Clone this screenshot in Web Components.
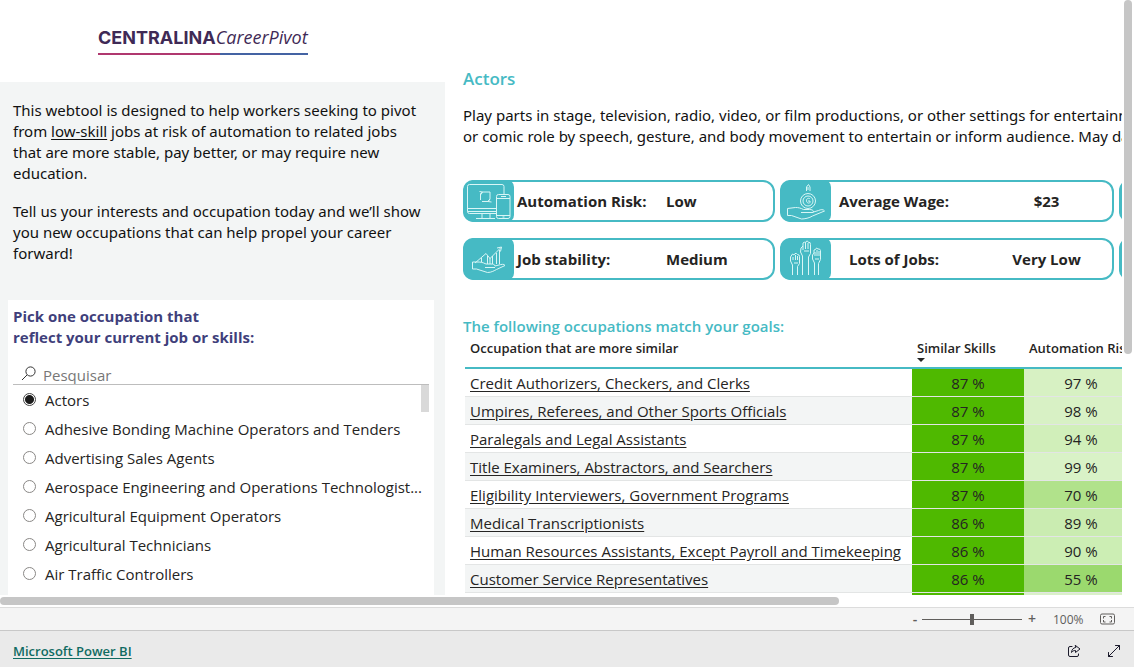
<!DOCTYPE html>
<html lang="en">
<head>
<meta charset="utf-8">
<title>Centralina Career Pivot</title>
<style>
html, body { height: 100%; margin: 0; }
body { font-family: "Open Sans", "Noto Sans", sans-serif; font-size: 15px; line-height: 21px; color: #252423; background: #fff; }
</style>
</head>
<body>
<report-app></report-app>
<script>
const define = (name, html, setup) => {
  const template = document.createElement('template');
  template.innerHTML = html;
  customElements.define(name, class extends HTMLElement {
    connectedCallback() {
      if (this.shadowRoot) return;
      this.attachShadow({ mode: 'open' }).append(template.content.cloneNode(true));
      if (setup) setup(this, this.shadowRoot);
    }
  });
};

define('brand-logo', `
<style>
:host { display: flex; justify-content: flex-start; box-sizing: border-box; height: 82px; padding: 25px 0 0 98px; color: #3f2a56; }
.mark { height: 30px; box-sizing: border-box; display: flex; align-items: baseline; line-height: 25px; white-space: nowrap; padding-bottom: 2px;
  border-bottom: 2px solid; border-image: linear-gradient(90deg, #b0386f 58%, #4463a3 58%) 1; }
b { font: 700 18px/25px Inter, sans-serif; }
i { font: italic 500 18px/25px "Open Sans", sans-serif; }
</style>
<div class="mark"><b>CENTRALINA</b><i>CareerPivot</i></div>`);

define('intro-text', `
<style>
:host { display: block; padding: 18px 13px 36px; color: #111; font-family: "Noto Sans", sans-serif; }
p { margin: 0 0 17px; white-space: nowrap; }
p:last-child { margin: 0; }
a { color: inherit; text-underline-offset: 2px; }
</style>
<p>This webtool is designed to help workers seeking to pivot<br>from <a href="#low-skill">low-skill</a> jobs at risk of automation to related jobs<br>that are more stable, pay better, or may require new<br>education.</p>
<p>Tell us your interests and occupation today and we’ll show<br>you new occupations that can help propel your career<br>forward!</p>`);

define('occupation-option', `
<style>
:host { display: block; height: 29px; }
label { display: flex; align-items: center; height: 29px; padding-left: 10px; gap: 9px; }
input { appearance: none; flex: none; width: 13px; height: 13px; margin: 0 0 2px; border: 1px solid #8a8886; border-radius: 50%; background: #fff; }
input:checked { border-color: #444; background: radial-gradient(circle, #1b1b1b 4px, #fff 5px); }
span { white-space: nowrap; }
</style>
<label><input type="radio" name="occupation"><span><slot></slot></span></label>`,
(host, root) => {
  const input = root.querySelector('input');
  input.checked = host.hasAttribute('checked');
  input.addEventListener('change', () => {
    for (const other of host.parentNode.querySelectorAll('occupation-option'))
      if (other !== host) other.shadowRoot.querySelector('input').checked = false;
  });
});

define('occupation-picker', `
<style>
:host { display: block; flex: 1; margin: 0 11px 0 8px; padding: 6px 5px 0; background: #fff; }
h2 { margin: 0 0 16px; font-size: 15px; line-height: 21px; font-weight: 700; color: #3f3f7b; }
.search { display: flex; align-items: center; height: 20px; gap: 7px; padding-left: 8px; border-bottom: 1px solid #bdbdbd; }
.search svg { flex: none; width: 15px; height: 15px; margin-bottom: 2px; }
input { flex: 1; min-width: 0; box-sizing: border-box; border: 0; padding: 2px 0 0; outline: 0; background: none; font: inherit; height: 20px; color: #252423; }
input::placeholder { color: #777; opacity: 1; }
.list { display: flex; }
.options { flex: 1; min-width: 0; margin-right: -8px; padding-top: 1px; }
.thumb { flex: none; width: 8px; height: 27px; background: #d9d9d9; }
</style>
<h2>Pick one occupation that<br>reflect your current job or skills:</h2>
<label class="search">
<svg viewBox="0 0 15 15" fill="none" stroke="#333" stroke-width="1"><circle cx="9.5" cy="5.5" r="4.6"/><path d="M6 9 1 14"/></svg>
<input type="search" placeholder="Pesquisar" aria-label="Pesquisar">
</label>
<div class="list">
<div class="options">
<occupation-option checked>Actors</occupation-option>
<occupation-option>Adhesive Bonding Machine Operators and Tenders</occupation-option>
<occupation-option>Advertising Sales Agents</occupation-option>
<occupation-option>Aerospace Engineering and Operations Technologist...</occupation-option>
<occupation-option>Agricultural Equipment Operators</occupation-option>
<occupation-option>Agricultural Technicians</occupation-option>
<occupation-option>Air Traffic Controllers</occupation-option>
</div>
<div class="thumb"></div>
</div>`);

define('stat-card', `
<style>
:host { display: flex; box-sizing: border-box; height: 42px; border: 2px solid #46bac4; border-radius: 12px; font-weight: 700; line-height: 21px; align-items: center; white-space: nowrap; }
.tile { flex: none; width: 51px; height: 42px; margin-left: -2px; border-radius: 10px 7px 7px 10px; background: #46bac4; }
::slotted(svg) { display: block; width: 51px; height: 42px; fill: none; stroke: #d9f6f6; stroke-width: 1; stroke-linejoin: round; }
.label { flex: none; width: 148px; padding-left: 3px; }
.value { flex: 1; padding-left: 1px; }
:host([centered]) .label { width: 126px; padding: 0; text-align: center; }
:host([centered]) .value { text-align: center; padding: 0 0 0 24px; }
</style>
<div class="tile"><slot name="icon"></slot></div>
<div class="label"><slot name="label"></slot></div>
<div class="value"><slot></slot></div>`);

define('stat-grid', `
<style>
:host { display: grid; grid-template-columns: 312px 334px 312px; gap: 16px 5px; }
</style>
<stat-card>
<svg slot="icon" viewBox="0 0 51 42"><path d="M33 33.500H6.500a2 2 0 0 1-2-2V6.500a2 2 0 0 1 2-2H39a2 2 0 0 1 2 2V14M4.500 28.500H33M4.500 31.500H33M19 34v4M27 34v4M13 38.500H32M17.500 20V13.500L19.500 12H27V19L25 21.500H19M16.500 11.500l3 .5-1.500 2.500M28.500 22l-3.500-.5 2-2.500"/><rect x="33.500" y="14.500" width="13.500" height="24" rx="2"/><path d="M33.500 18.500h13.500M33.500 35.500h13.500M38 16.500h5M39.500 37h2"/></svg>
<span slot="label">Automation Risk:</span>Low</stat-card>
<stat-card centered>
<svg slot="icon" viewBox="0 0 51 42"><path d="M26.500 11V7l2-2.500 1.500 2.500v4M28 10V7"/><circle cx="28" cy="21" r="7.500"/><circle cx="28" cy="21" r="5"/><path d="M30 19c-1-1.500-4-.5-3.500 2s3 2.500 3.500 1.500v-1.500h-2"/><path d="M7.500 28.500v7h4l10 3.500c3 0 8-1 11-3l12-5c-1-2-4-1.500-6-.5l-5 1.500c0-2-2-2.500-4-2.500h-6c-3-1.500-5-2-8-2zM21 32.500h12.500"/></svg>
<span slot="label">Average Wage:</span>$23</stat-card>
<stat-card></stat-card>
<stat-card>
<svg slot="icon" viewBox="0 0 51 42"><path d="M9.500 24v7h4l11 3.500c4 0 7-2 9-3l8.500-4c-1-2-4-1-6-.5l-4 1c0-1.500-2-2-4-2h-5c-4-2-6-2-9-2zM22 29.500h10"/><path d="M12 25l11-9.500 4 5 11-11M34 10l4.500-1-1 4.500M18.500 20v4M24.500 18v8M29.500 18v8M33.500 15v11M36.500 12v14M27 20v6"/></svg>
<span slot="label">Job stability:</span>Medium</stat-card>
<stat-card centered>
<svg slot="icon" viewBox="0 0 51 42"><path d="M22.500 37V18l-2-4 .5-4 2-2V5l1.500-1 1 1 .5-1.500 1.500-.5 1 1.500 1.500 0 .5 2v9l-2 3.500v18M23 8v4M25.500 5v6M28 5v6M24 13h5"/><path d="M12.500 37V27l-2-4v-4l2-3 1.500 1 1-1.500 1.500 0 1 1 1.500.5.500 1.500v7l-2 3v8.500M13 19v3M15.500 17v5M17.500 18v4M14 25h4"/><path d="M34.500 37V25l-2-4v-4l1.500-2v-3l1.500-.5 1-1.500 1.500 1 1.500 0 1 1.500v9l-2 4v11.500M35 14v4M37 12v6M39 13v5M35 21h4"/></svg>
<span slot="label">Lots of Jobs:</span>Very Low</stat-card>
<stat-card></stat-card>`);

const matches = [
  ['Credit Authorizers, Checkers, and Clerks', '87 %', '97 %', '#d7f1c3'],
  ['Umpires, Referees, and Other Sports Officials', '87 %', '98 %', '#d8f1c5'],
  ['Paralegals and Legal Assistants', '87 %', '94 %', '#d1efba'],
  ['Title Examiners, Abstractors, and Searchers', '87 %', '99 %', '#d9f2c7'],
  ['Eligibility Interviewers, Government Programs', '87 %', '70 %', '#b1e28b'],
  ['Medical Transcriptionists', '86 %', '89 %', '#caecb1'],
  ['Human Resources Assistants, Except Payroll and Timekeeping', '86 %', '90 %', '#cceeb4'],
  ['Customer Service Representatives', '86 %', '55 %', '#9bd96e'],
  ['', '', '', '#daf0c9']
];

define('match-table', `
<style>
:host { display: block; padding-left: 2px; }
table { border-collapse: separate; border-spacing: 0; table-layout: fixed; width: 800px; }
.c1 { width: 447px; } .c2 { width: 112px; } .c3 { width: 114px; }
th { box-sizing: border-box; height: 32px; padding: 1px 5px 0; border-bottom: 2px solid #46bac4; font-size: 13px; line-height: 20px; font-weight: 600; text-align: left; vertical-align: top; white-space: nowrap; }
th svg { display: block; width: 8px; height: 4px; }
td { box-sizing: border-box; height: 28px; padding: 2px 5px 0; border-bottom: 1px solid #e3e5e5; line-height: 21px; white-space: nowrap; }
tr:nth-child(even) td { background: #f3f5f5; }
tbody tr td:nth-child(2), tbody tr td:nth-child(3) { text-align: center; }
tbody tr td:nth-child(2) { background: #4fb900; }
tbody tr td:nth-child(3) { background: var(--risk); }
a { color: inherit; text-underline-offset: 2px; }
</style>
<table>
<colgroup><col class="c1"><col class="c2"><col class="c3"><col></colgroup>
<thead><tr><th>Occupation that are more similar</th><th>Similar Skills<svg viewBox="0 0 8 4"><path d="M0 0h8L4 4z" fill="#252423"/></svg></th><th>Automation Risk</th><th></th></tr></thead>
<tbody></tbody>
</table>`,
(host, root) => {
  root.querySelector('tbody').innerHTML = matches.map(([name, skills, risk, shade]) =>
    `<tr style="--risk: ${shade}"><td>${name && `<a href="#">${name}</a>`}</td><td>${skills}</td><td>${risk}</td><td></td></tr>`).join('');
});

define('occupation-detail', `
<style>
:host { display: block; flex: 1; min-width: 0; padding: 68px 0 0 18px; }
h1, h2 { margin: 0; color: #46bac4; font-weight: 600; line-height: 21px; }
h1 { font-size: 17px; margin-bottom: 16px; }
h2 { font-size: 15px; margin-top: 36px; }
p { margin: 0 0 33px; color: #111; white-space: nowrap; font-family: "Noto Sans", sans-serif; }
</style>
<h1>Actors</h1>
<p>Play parts in stage, television, radio, video, or film productions, or other settings for entertainment, information, or instruction.<br>or comic role by speech, gesture, and body movement to entertain or inform audience. May dance and sing.</p>
<stat-grid></stat-grid>
<h2>The following occupations match your goals:</h2>
<match-table></match-table>`);

define('report-canvas', `
<style>
:host { display: flex; min-width: 1500px; height: 100%; }
.side { flex: none; width: 445px; display: flex; flex-direction: column; }
.panel { flex: 1; display: flex; flex-direction: column; background: #f3f5f5; }
</style>
<div class="side"><brand-logo></brand-logo><div class="panel"><intro-text></intro-text><occupation-picker></occupation-picker></div></div>
<occupation-detail></occupation-detail>`);

define('zoom-bar', `
<style>
:host { display: flex; align-items: center; justify-content: flex-end; box-sizing: border-box; height: 23px; padding-right: 19px; border-top: 1px solid #dcdcdc; background: #f4f4f4; color: #605e5c; font-size: 12px; }
button { border: 0; padding: 0; background: none; color: inherit; font: 600 14px/20px "Open Sans", sans-serif; width: 14px; height: 20px; }
input { appearance: none; width: 100px; height: 12px; margin: 0 3px 0 0; background: linear-gradient(#605e5c, #605e5c) center / 100% 1px no-repeat; }
input::-webkit-slider-thumb { appearance: none; width: 4px; height: 11px; background: #605e5c; }
output { width: 29px; margin: 0 18px 0 14px; }
.fit { width: 15px; height: 20px; display: flex; align-items: center; }
svg { width: 15px; height: 12px; }
</style>
<button aria-label="Zoom out">-</button>
<input type="range" aria-label="Zoom" min="0" max="100" value="50">
<button aria-label="Zoom in">+</button>
<output>100%</output>
<button class="fit" aria-label="Fit to page"><svg viewBox="0 0 15 12" fill="none" stroke="#605e5c"><rect x=".5" y="1" width="14" height="10" rx="1.500"/><path d="M5.500 3.500h-2v2M3.500 7v2h2M9.500 3.500h2v2M11.500 7v2h-2"/></svg></button>`);

define('embed-footer', `
<style>
:host { display: flex; align-items: center; box-sizing: border-box; height: 37px; padding: 4px 13px 0; border-top: 1px solid #c8c8c8; background: #eaeaea; }
a { margin-right: auto; font-size: 13px; font-weight: 600; color: #106b62; text-underline-offset: 2px; }
button { border: 0; padding: 0; background: none; width: 14px; height: 14px; margin-left: 26px; }
svg { display: block; width: 14px; height: 14px; fill: none; stroke: #1b1a2b; stroke-linecap: round; stroke-linejoin: round; }
</style>
<a href="https://powerbi.microsoft.com">Microsoft Power BI</a>
<button aria-label="Share"><svg viewBox="0 0 14 14"><path d="M5 2.500H3A1.500 1.500 0 0 0 1.500 4v7A1.500 1.500 0 0 0 3 12.500h7a1.500 1.500 0 0 0 1.500-1.500v-1M8.500 1.500l4.500 3.500-4.500 3.500V6.500C6.500 6.500 5.500 7 4.500 8.500c.3-3 1.500-4.500 4-5z"/></svg></button>
<button aria-label="Full screen"><svg viewBox="0 0 14 14"><path d="M1.500 12.500l11-11M8.500 1.500h4v4M1.500 8.500v4h4"/></svg></button>`);

define('report-app', `
<style>
:host { display: flex; flex-direction: column; height: 100vh; }
.viewport { flex: 1; min-height: 0; display: grid; grid-template: minmax(0, 1fr) 8px / minmax(0, 1fr) 8px; gap: 2px; padding: 0 2px 2px 0; }
.page { overflow: hidden; }
.bar { border-radius: 4px; background: #c6c6c6; }
.v { height: 59.5%; }
.h { width: 74.8%; }
</style>
<div class="viewport">
<div class="page"><report-canvas></report-canvas></div>
<div class="bar v"></div>
<div class="bar h"></div>
</div>
<zoom-bar></zoom-bar>
<embed-footer></embed-footer>`);
</script>
</body>
</html>
